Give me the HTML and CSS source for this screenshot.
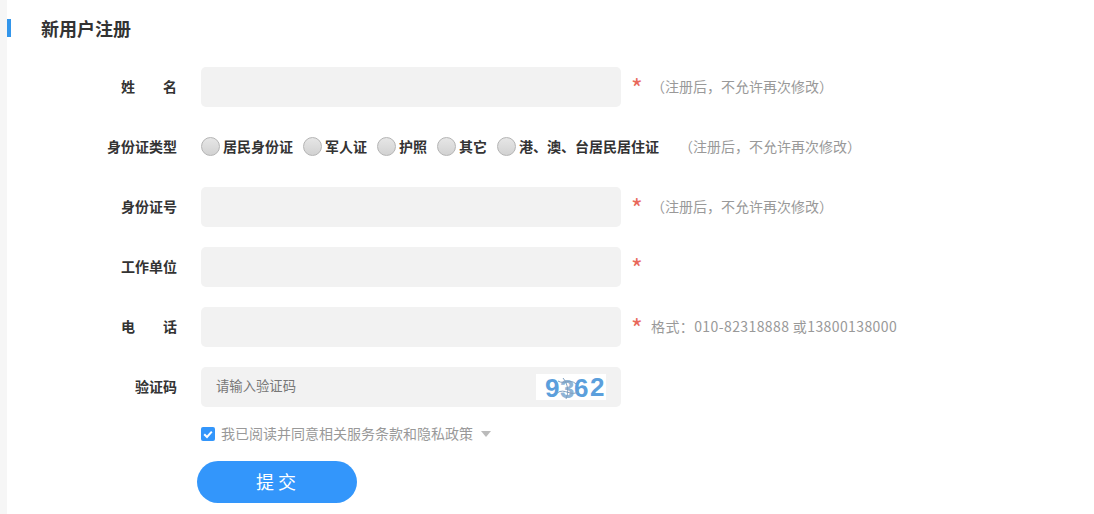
FILE: index.html
```html
<!DOCTYPE html>
<html lang="zh-CN">
<head>
    <meta charset="UTF-8">
    <title>新用户注册</title>
    <link rel="stylesheet" href="styles.css">
</head>
<body>

<div class="strip"></div>

<div class="main">
    <h2 class="title">新用户注册</h2>

    <form class="reg-form">
        <div class="row">
            <label class="label">姓<span class="wide"></span>名</label>
            <div class="field"></div>
            <span class="star">*</span>
            <span class="tip tip-name">（注册后，不允许再次修改）</span>
        </div>

        <div class="row">
            <label class="label">身份证类型</label>
            <div class="radios">
                <span class="radio"><i></i>居民身份证</span>
                <span class="radio"><i></i>军人证</span>
                <span class="radio"><i></i>护照</span>
                <span class="radio"><i></i>其它</span>
                <span class="radio"><i></i>港、澳、台居民居住证</span>
            </div>
            <span class="tip tip-type">（注册后，不允许再次修改）</span>
        </div>

        <div class="row">
            <label class="label">身份证号</label>
            <div class="field"></div>
            <span class="star">*</span>
            <span class="tip tip-name">（注册后，不允许再次修改）</span>
        </div>

        <div class="row">
            <label class="label">工作单位</label>
            <div class="field"></div>
            <span class="star">*</span>
        </div>

        <div class="row">
            <label class="label">电<span class="wide"></span>话</label>
            <div class="field"></div>
            <span class="star">*</span>
            <span class="tip tip-phone">格式：010-82318888 或13800138000</span>
        </div>

        <div class="row">
            <label class="label">验证码</label>
            <div class="field field-code">
                <span class="placeholder">请输入验证码</span>
                <svg class="captcha" width="70" height="26" viewBox="0 0 70 26">
                    <rect width="70" height="26" fill="#fff"/>
                    <text x="9" y="23" class="captcha-num">9</text>
                    <text x="24" y="24" class="captcha-num captcha-faded">3</text>
                    <text x="38" y="23" class="captcha-num">6</text>
                    <text x="54" y="22" class="captcha-num">2</text>
                    <path d="M22 7 C28 11 34 4 40 10 M21 19 C29 13 35 24 43 17 M27 4 C32 10 33 18 30 25" fill="none" stroke="#7f9fbf" stroke-width="1"/>
                </svg>
            </div>
        </div>

        <div class="agree">
            <svg class="check" width="14" height="14" viewBox="0 0 14 14">
                <rect width="14" height="14" rx="2" fill="#3396fb"/>
                <path d="M3.2 7.2 L6 10 L10.8 4.6" fill="none" stroke="#fff" stroke-width="2"/>
            </svg>
            <span class="agree-text">我已阅读并同意相关服务条款和隐私政策</span>
            <span class="arrow"></span>
        </div>

        <button type="button" class="submit">提交</button>
    </form>
</div>

</body>
</html>
```

FILE: styles.css
```css
* {
    box-sizing: border-box;
}

html, body {
    height: 514px;
    overflow: hidden;
}

body {
    display: flex;
    margin: 0;
    background-color: #fff;
    font-family: "Noto Sans CJK SC", "Liberation Sans", sans-serif;
    color: #333;
}

.strip {
    width: 7px;
    flex-shrink: 0;
    background-color: #f6f6f6;
}

.main {
    flex: 1;
    padding-top: 19px;
}

.title {
    height: 18px;
    margin: 0 0 30px;
    padding-left: 30px;
    border-left: 4px solid #3396eb;
    font-size: 18px;
    line-height: 18px;
    font-weight: bold;
}

.row {
    display: flex;
    align-items: center;
    height: 40px;
    margin-bottom: 20px;
}

.label {
    display: flex;
    justify-content: flex-end;
    width: 170px;
    margin-right: 24px;
    padding-bottom: 2px;
    font-size: 14px;
    font-weight: bold;
}

.wide {
    width: 28px;
}

.field {
    width: 420px;
    height: 40px;
    border-radius: 5px;
    background-color: #f2f2f2;
}

.field-code {
    display: flex;
    align-items: center;
    justify-content: space-between;
    padding: 0 15px;
}

.placeholder {
    padding-bottom: 4px;
    font-size: 13.33px;
    color: #777;
}

.captcha {
    overflow: visible;
}

.captcha-num {
    font-family: "Liberation Sans", sans-serif;
    font-size: 26px;
    font-weight: bold;
    fill: #5b9fdc;
}

.captcha-faded {
    fill: #8fb4d6;
}

.star {
    width: 14px;
    margin-left: 10px;
    height: 40px;
    font-size: 25px;
    line-height: 40px;
    color: #e8695c;
}

.tip {
    padding-bottom: 2px;
    font-size: 14px;
    color: #999;
}

.tip-name {
    margin-left: 6px;
}

.tip-type {
    margin-left: 20px;
}

.tip-phone {
    margin-left: 6px;
    letter-spacing: 0.4px;
}

.radios {
    display: flex;
    gap: 10px;
    padding-bottom: 2px;
}

.radio {
    display: flex;
    align-items: center;
    font-size: 14px;
    font-weight: bold;
}

.radio i {
    width: 19px;
    height: 19px;
    margin-right: 3px;
    border: 1px solid #b4b4b4;
    border-radius: 50%;
    background: linear-gradient(#e6e6e6, #d2d2d2);
}

.agree {
    display: flex;
    align-items: center;
    height: 14px;
    margin: 0 0 20px 194px;
}

.agree-text {
    margin-left: 6px;
    padding-bottom: 2px;
    font-size: 14px;
    color: #999;
}

.arrow {
    margin: 0 0 0 8px;
    border-top: 6px solid #bbb;
    border-left: 5px solid transparent;
    border-right: 5px solid transparent;
}

.submit {
    display: block;
    width: 160px;
    height: 42px;
    margin-left: 190px;
    padding: 0 6px 2px 8px;
    border: none;
    border-radius: 21px;
    background-color: #3396fb;
    color: #fff;
    font-family: inherit;
    font-size: 18px;
    letter-spacing: 4px;
    cursor: pointer;
}
```
